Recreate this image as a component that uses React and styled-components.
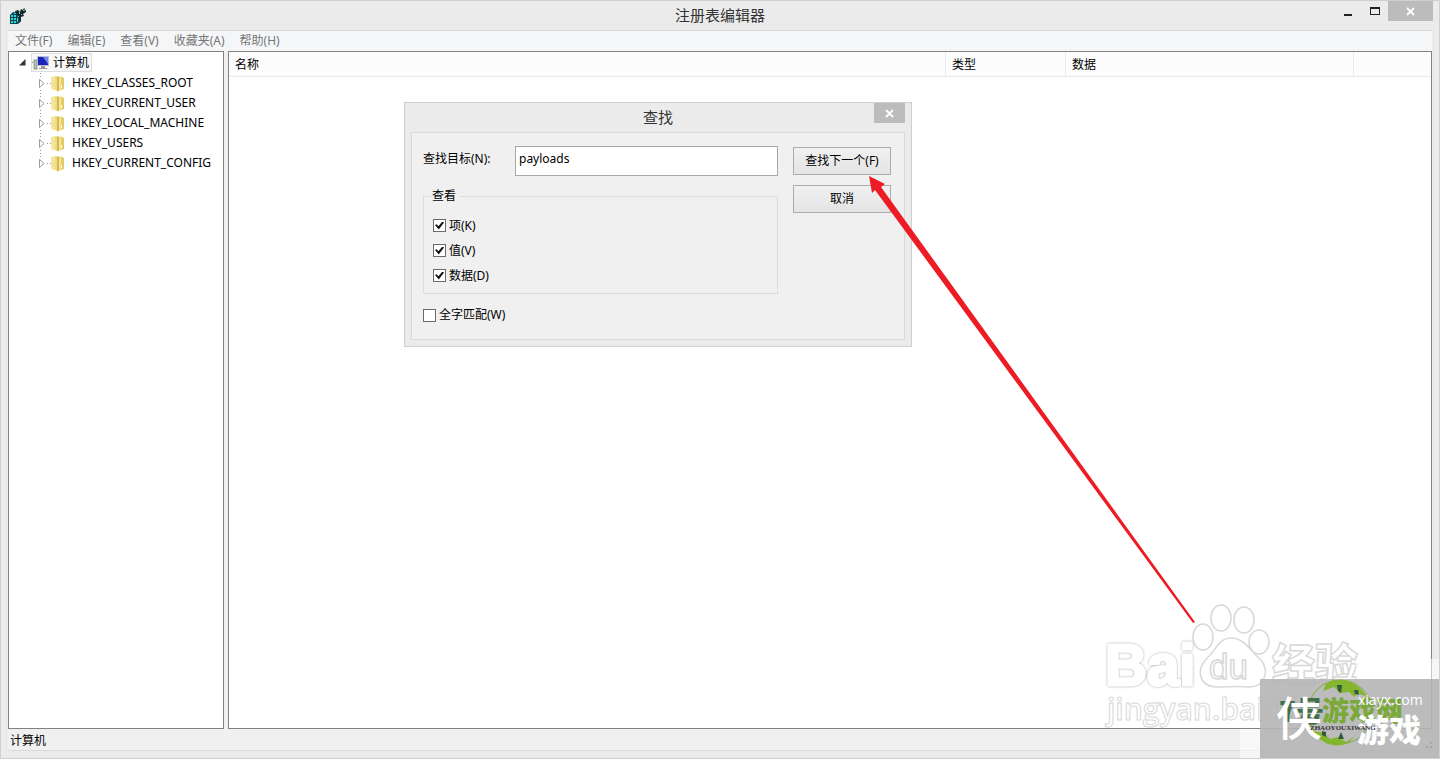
import React from "react";
import styled, { createGlobalStyle, css } from "styled-components";

const Global = createGlobalStyle`
  * { box-sizing: border-box; }
  body {
    margin: 0;
    font-family: "Noto Sans", "Noto Sans CJK SC", sans-serif;
    font-size: 12px;
    line-height: 20px;
    color: #000;
  }
  button, input { font: inherit; color: inherit; }
`;

const Window = styled.div`
  position: relative;
  height: 100vh;
  display: flex;
  flex-direction: column;
  padding: 0 7px 7px;
  overflow: hidden;
  background: #ebebeb;
  border: 1px solid #cfcfcf;
`;

const TitleBar = styled.header`
  position: relative;
  display: flex;
  align-items: center;
  height: 29px;
  padding-bottom: 2px;
  flex: none;
`;

const Title = styled.h1`
  flex: 1;
  margin: 0;
  text-align: center;
  font-size: 15px;
  font-weight: 400;
  color: #333;
`;

const WindowIcon = styled.svg`
  position: absolute;
  left: 1px;
  top: 6px;
`;

const Controls = styled.div`
  position: absolute;
  right: -1px;
  top: 0;
  display: flex;
`;

const Control = styled.button`
  display: grid;
  place-items: center;
  width: ${(p) => p.$width}px;
  height: 20px;
  padding: 0;
  border: 0;
  background: ${(p) => (p.$close ? "#bcbcbc" : "transparent")};
`;

const Client = styled.div`
  flex: 1;
  min-height: 0;
  display: flex;
  flex-direction: column;
  border: solid #dadada;
  border-width: 1px 0;
  background: #f0f0f0;
`;

const MenuBar = styled.nav`
  display: flex;
  gap: 15px;
  height: 20px;
  padding: 0 7px;
  flex: none;
  background: #f5f6f7;
`;

const MenuItem = styled.button`
  padding: 0;
  border: 0;
  background: none;
  color: #777;
  line-height: 20px;
`;

const Panes = styled.main`
  flex: 1;
  min-height: 0;
  display: flex;
  gap: 4px;
`;

const Pane = styled.section`
  background: #fff;
  border: 1px solid #828282;
  ${(p) => (p.$tree ? css`width: 216px; flex: none;` : css`flex: 1;`)}
`;

const Tree = styled.ul`
  list-style: none;
  margin: 0;
  padding: 0;
`;

const Root = styled.div`
  display: flex;
  align-items: center;
  gap: 5px;
  height: 21px;
  padding-left: 10px;
`;

const RootLabel = styled.span`
  display: flex;
  align-items: center;
  gap: 3px;
  height: 19px;
  padding-right: 2px;
  border: 1px solid #dedede;
  background: #f7f7f7;
`;

const Branch = styled.li`
  display: flex;
  align-items: center;
  height: 20px;
  padding-left: 28px;
  white-space: nowrap;
`;

const BranchIcon = styled.svg`
  flex: none;
  margin-right: 5px;
`;

const ListTable = styled.table`
  width: 100%;
  table-layout: fixed;
  border-collapse: separate;
  border-spacing: 0;
`;

const ListHead = styled.th`
  width: ${(p) => (p.$width ? `${p.$width}px` : "auto")};
  height: 25px;
  padding: 1px 6px 0;
  text-align: left;
  font-weight: 400;
  background: #fcfcfc;
  border-bottom: 1px solid #e6eaf0;
  border-right: ${(p) => (p.$last ? "0" : "1px solid #e6eaf0")};
`;

const StatusBar = styled.footer`
  flex: none;
  height: 21px;
  padding: 2px 0 0 2px;
  line-height: 19px;
`;

const Dialog = styled.section`
  position: absolute;
  left: 403px;
  top: 101px;
  width: 508px;
  height: 245px;
  padding: 0 6px 6px;
  display: flex;
  flex-direction: column;
  background: #ebebeb;
  border: 1px solid #cfcfcf;
`;

const DialogControls = styled(Controls)`
  right: 0;
`;

const DialogBody = styled.form`
  flex: 1;
  display: flex;
  justify-content: space-between;
  padding: 13px 13px 0 11px;
  border: 1px solid #d9d9d9;
  background: #f0f0f0;
`;

const Fields = styled.div`
  width: 355px;
`;

const FieldRow = styled.div`
  display: flex;
  justify-content: space-between;
`;

const FieldLabel = styled.label`
  line-height: 26px;
`;

const TextInput = styled.input`
  width: 263px;
  height: 30px;
  padding: 0 3px 6px;
  border: 1px solid #a5a7ac;
  background: #fff;
`;

const Group = styled.fieldset`
  margin: 10px 0;
  padding: 7px 9px 0;
  border: 1px solid #dcdcdc;
  height: 108px;
`;

const Legend = styled.legend`
  padding: 0 4px 0 1px;
  margin-left: -2px;
`;

const CheckLabel = styled.label`
  display: flex;
  align-items: center;
  gap: 3px;
  height: ${(p) => (p.$grouped ? 25 : 22)}px;
`;

const CheckBox = styled.input`
  appearance: none;
  width: 13px;
  height: 13px;
  margin: 0;
  border: 1px solid #6b6b6b;
  background: #fff;
  display: grid;
  place-items: center;
  &:checked::before {
    content: "";
    width: 9px;
    height: 8px;
    background: #111;
    clip-path: polygon(0 45%, 18% 35%, 38% 60%, 82% 0, 100% 14%, 42% 100%);
  }
`;

const Buttons = styled.div`
  display: flex;
  flex-direction: column;
  gap: 10px;
  padding-top: 1px;
`;

const PushButton = styled.button`
  width: 98px;
  height: 28px;
  padding: 0;
  border: 1px solid #acacac;
  background: linear-gradient(#f1f1f1, #e4e4e4);
`;

const Arrow = styled.svg`
  position: absolute;
  left: 859px;
  top: 169px;
  pointer-events: none;
`;

const Watermark = styled.svg`
  position: absolute;
  right: -1px;
  bottom: -1px;
  pointer-events: none;
`;

const SoftOutline = styled.g`
  fill: #fff;
  stroke: #fff;
  stroke-width: 3px;
  stroke-linejoin: round;
  font-family: "Liberation Sans", sans-serif;
  font-weight: 700;
  filter: drop-shadow(0 0 1px #a8a8a8);
`;

const Cross = () => (
  <svg width="9" height="9" viewBox="0 0 9 9">
    <path d="M1 1l7 7M8 1l-7 7" stroke="#fff" strokeWidth="1.8" />
  </svg>
);

const menus = ["文件(F)", "编辑(E)", "查看(V)", "收藏夹(A)", "帮助(H)"];
const keys = [
  "HKEY_CLASSES_ROOT",
  "HKEY_CURRENT_USER",
  "HKEY_LOCAL_MACHINE",
  "HKEY_USERS",
  "HKEY_CURRENT_CONFIG",
];
const columns = [
  { name: "名称" },
  { name: "类型", width: 120 },
  { name: "数据", width: 288 },
  { name: "", width: 77 },
];
const lookAt = ["项(K)", "值(V)", "数据(D)"];

const RegistryIcon = () => (
  <WindowIcon width="18" height="18" viewBox="0 0 18 18" aria-hidden="true">
    <path d="M1 8l3-3 8 1v8l-3 3H1z" fill="#0b4a50" />
    <path d="M2 8h2v2H2zM5 8h2v2H5zM2 11h2v2H2zM5 11h2v2H5zM2 14h2v2H2zM5 14h2v2H5zM8 11h1v4H8zM5 6h2v1H5z" fill="#35d5d8" />
    <path d="M6 4l3-1 2 2 1-3 2 1 1-2 1 1-1 2 2-1v2l-3 2 1 2-3 1v4l-2 2V9L7 7z" fill="#16292b" />
    <path d="M10 5h1v2h-1zM12 7h1v1h-1zM9 9h1v1H9zM14 3h1v1h-1z" fill="#4ad0d2" />
  </WindowIcon>
);

const ComputerIcon = () => (
  <svg width="18" height="17" viewBox="0 0 18 17" aria-hidden="true">
    <path d="M0 8.500h2" stroke="#888" strokeDasharray="1 1" />
    <rect x="2" y="6" width="3" height="9" fill="#b7c4ae" stroke="#6f7f6d" strokeWidth=".7" />
    <rect x="5.500" y="2.500" width="11" height="9" fill="#1d22b8" stroke="#b9bdd0" />
    <path d="M11 3h5v7z" fill="#6f86ee" />
    <path d="M9 12h4v2h2v1H7v-1h2z" fill="#9a9a9a" />
  </svg>
);

const KeyIcon = ({ last }) => (
  <BranchIcon width="30" height="20" viewBox="0 0 30 20" aria-hidden="true">
    <defs>
      <linearGradient id="folder" x1="0" x2="1">
        <stop offset="0" stopColor="#f6eba8" />
        <stop offset="1" stopColor="#e3c75a" />
      </linearGradient>
    </defs>
    <path d={last ? "M3.500 0v5M10 10.500h4" : "M3.500 0v5M3.500 17v3M10 10.500h4"} stroke="#999" strokeDasharray="1 2" fill="none" />
    <path d="M2.500 6.500v8l4.500-4z" fill="#fff" stroke="#9a9a9a" />
    <path d="M14 4l5-1 7 1 1 2v10l-6 2-7-2z" fill="url(#folder)" />
    <path d="M20 3.500l2 1v13l-2 1z" fill="#d6b84c" />
    <path d="M22 4l2 1v12l-2 1z" fill="#f4e596" />
    <path d="M24.500 12v3" stroke="#fff" />
  </BranchIcon>
);

const Marks = () => (
  <Watermark width="340" height="164" viewBox="1100 595 340 164" aria-hidden="true">
    <g fill="#fff" stroke="#d8d8d8" strokeWidth="1.500">
      <ellipse cx="1203" cy="637" rx="10" ry="13" />
      <ellipse cx="1221" cy="618" rx="10" ry="13" />
      <ellipse cx="1244" cy="620" rx="10" ry="13" />
      <ellipse cx="1259" cy="642" rx="10" ry="12" />
      <path d="M1231 638c-12 0-15 12-23 19-13 13-9 29 8 30 11 0 23-1 33 0 17 0 20-17 12-27-10-8-16-22-30-22z" />
      <text x="1209" y="679" fontSize="35" fontWeight="400" fontFamily="Liberation Sans">du</text>
      <text x="1272" y="680" fontSize="43" fontWeight="900" fontFamily="Noto Sans CJK SC">经验</text>
      <text x="1107" y="720" fontSize="30" fontWeight="600" fontFamily="Open Sans" strokeWidth="1">jingyan.baidu</text>
    </g>
    <SoftOutline>
      <text x="1105" y="685" fontSize="58">Bai</text>
    </SoftOutline>
    <path d="M1240 729h20v30h-20zM1356 659h84v20h-84z" fill="#fff" opacity=".55" />
    <path d="M1260 679h180v80h-180z" fill="#b5b5b5" opacity=".9" />
    <circle cx="1340" cy="712" r="32" fill="none" stroke="#86ad36" />
    <path d="M1326 684c10-7 30-6 41 13l-9-4-4 4-5-5-9 1-6-6-11 4zM1312 731l12 2 6 6 8-2 8 5 8-5c-10 13-30 11-42-6z" fill="#84b52e" />
    <path d="M1337 685h5l-1 8-3-2zM1354 690l4 0 1 5-4-1zM1341 732l3 7h-6zM1322 731l4 1 0 5-4-2z" fill="#315a42" />
    <text x="1279" y="722" fontSize="28" fontWeight="900" fill="#3f704a" fontFamily="Noto Sans CJK SC">7号</text>
    <text x="1322" y="721" fontSize="27" fontWeight="900" fill="#7aa93a" fontFamily="Noto Sans CJK SC">游戏网</text>
    <text x="1276" y="735" fontSize="46" fontWeight="500" fill="#fff" fontFamily="Noto Sans CJK SC">侠</text>
    <text x="1357" y="742" fontSize="32" fontWeight="900" fill="#fff" fontFamily="Noto Sans CJK SC">游戏</text>
    <text x="1310" y="730" fontSize="7" fontWeight="700" fill="#333" fontFamily="Liberation Serif">ZHAOYOUXIWANG</text>
    <text x="1358" y="705" fontSize="14" fill="#fff" fontFamily="Open Sans">xiayx.com</text>
    <path d="M1430 742h2v2h-2zM1426 746h2v2h-2zM1430 746h2v2h-2z" fill="#a6a6a6" />
  </Watermark>
);

export default function App() {
  return (
    <>
      <Global />
      <Window>
        <TitleBar>
          <RegistryIcon />
          <Title>注册表编辑器</Title>
          <Controls>
            <Control $width={28} aria-label="最小化">
              <svg width="8" height="12"><path d="M0 9h8v2H0z" fill="#222" /></svg>
            </Control>
            <Control $width={26} aria-label="最大化">
              <svg width="10" height="8"><path d="M0 0h10v8H0zM1 2v5h8V2z" fillRule="evenodd" fill="#222" /></svg>
            </Control>
            <Control $width={45} $close aria-label="关闭"><Cross /></Control>
          </Controls>
        </TitleBar>
        <Client>
          <MenuBar>
            {menus.map((m) => <MenuItem key={m}>{m}</MenuItem>)}
          </MenuBar>
          <Panes>
            <Pane $tree>
              <Root>
                <svg width="7" height="7" viewBox="0 0 7 7"><path d="M6.500 0v6.500H0z" fill="#333" /></svg>
                <RootLabel><ComputerIcon />计算机</RootLabel>
              </Root>
              <Tree>
                {keys.map((k, i) => (
                  <Branch key={k}><KeyIcon last={i === keys.length - 1} />{k}</Branch>
                ))}
              </Tree>
            </Pane>
            <Pane>
              <ListTable>
                <thead>
                  <tr>
                    {columns.map((c, i) => (
                      <ListHead key={i} $width={c.width} $last={i === 3}>{c.name}</ListHead>
                    ))}
                  </tr>
                </thead>
              </ListTable>
            </Pane>
          </Panes>
          <StatusBar>计算机</StatusBar>
        </Client>
        <Dialog role="dialog" aria-label="查找">
          <TitleBar>
            <Title as="h2">查找</Title>
            <DialogControls>
              <Control $width={31} $close aria-label="关闭"><Cross /></Control>
            </DialogControls>
          </TitleBar>
          <DialogBody>
            <Fields>
              <FieldRow>
                <FieldLabel htmlFor="target">查找目标(N):</FieldLabel>
                <TextInput id="target" defaultValue="payloads" />
              </FieldRow>
              <Group>
                <Legend>查看</Legend>
                {lookAt.map((l) => (
                  <CheckLabel key={l} $grouped><CheckBox type="checkbox" defaultChecked />{l}</CheckLabel>
                ))}
              </Group>
              <CheckLabel><CheckBox type="checkbox" />全字匹配(W)</CheckLabel>
            </Fields>
            <Buttons>
              <PushButton type="button">查找下一个(F)</PushButton>
              <PushButton type="button">取消</PushButton>
            </Buttons>
          </DialogBody>
        </Dialog>
        <Marks />
        <Arrow width="340" height="460" viewBox="860 170 340 460" aria-hidden="true">
          <path d="M869 176L885 184L881 187L1195 622L1193 623L875 190L872 193Z" fill="#ed1c24" />
        </Arrow>
      </Window>
    </>
  );
}
